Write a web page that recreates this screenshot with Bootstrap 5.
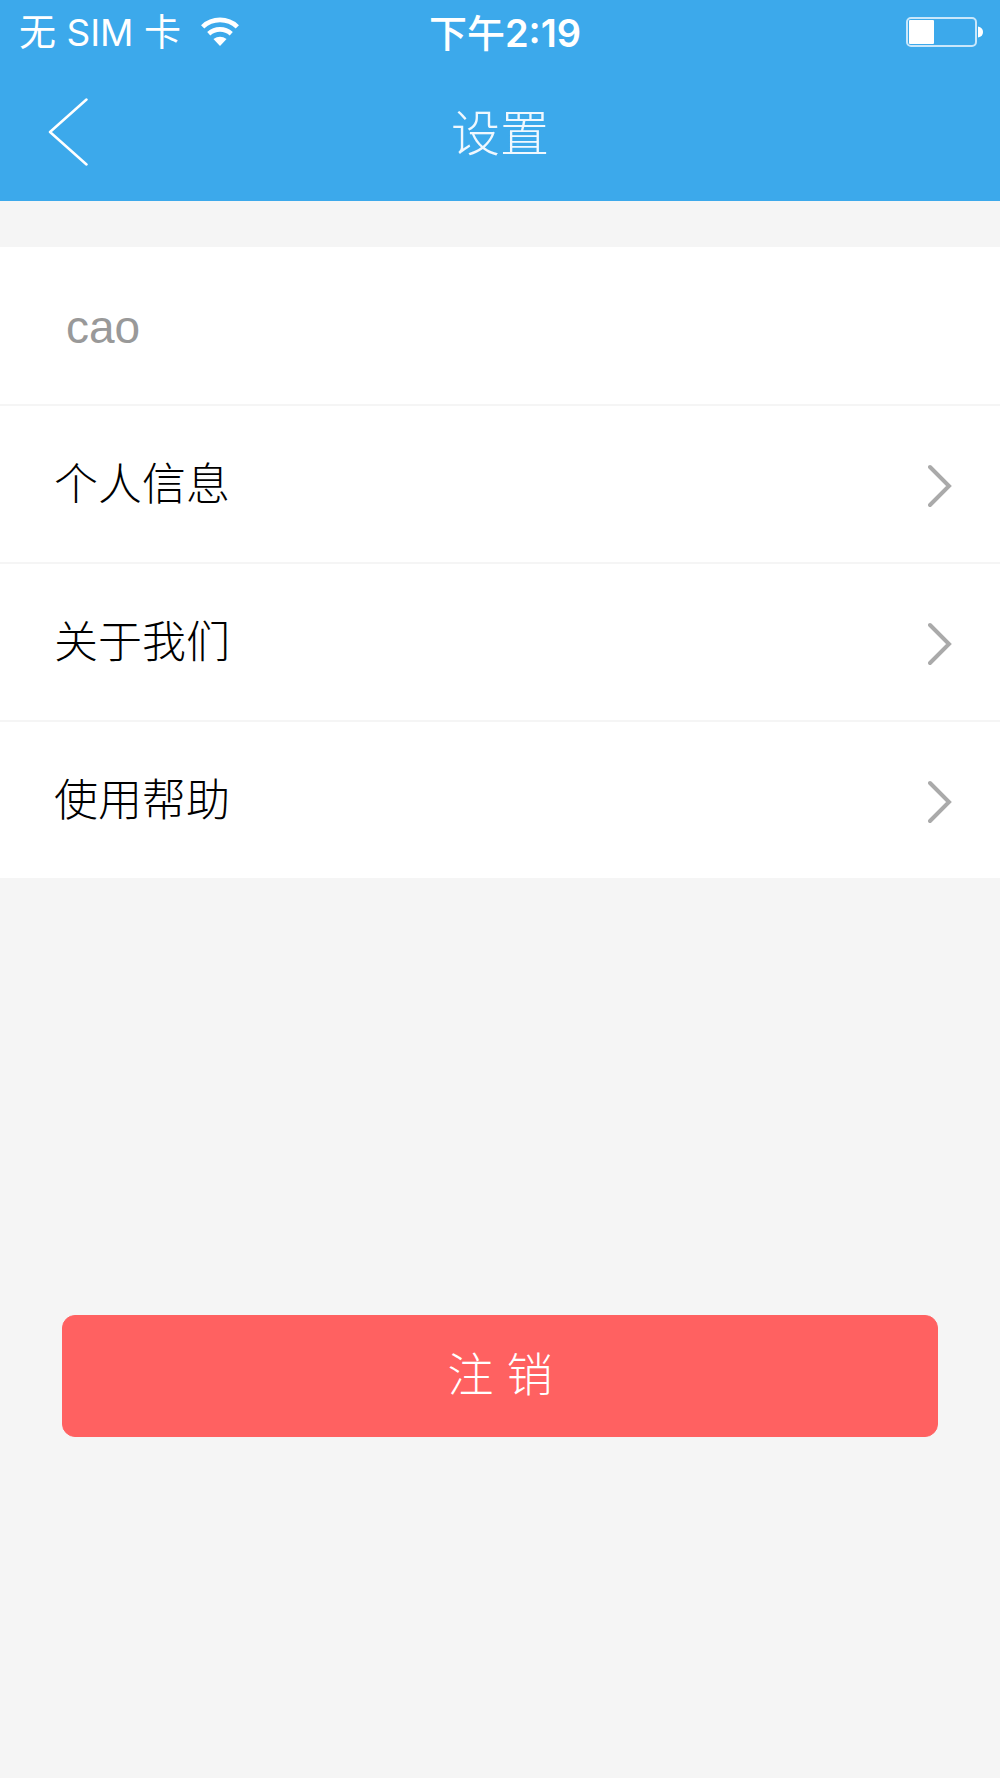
<!DOCTYPE html>
<html lang="zh-CN">
<head>
<meta charset="utf-8">
<meta name="viewport" content="width=device-width, initial-scale=1">
<title>设置</title>
<link href="https://cdn.jsdelivr.net/npm/bootstrap@5.3.0/dist/css/bootstrap.min.css" rel="stylesheet">
<style>
  body { background: #f5f5f5; font-family: "Liberation Sans", "Noto Sans CJK SC", sans-serif; }
  .app-header { background: #3ca9eb; height: 201px; }
  .status-bar { height: 64px; padding: 0 17px 0 19px; font-family: Inter, "Noto Sans CJK SC", sans-serif; font-size: 37px; line-height: 60px; }
  .status-left { gap: 19px; }
  .status-text { padding-top: 2px; }
  .status-time { padding-left: 8px; font-size: 38px; font-weight: 500; }
  .status-digits { font-weight: 600; }
  .title-bar { height: 137px; padding: 0 48px; }
  .back-link { margin-top: 6px; }
  .page-title { padding-top: 2px; font-size: 49px; line-height: 64px; font-weight: 300; color: #f0f8fe; }
  .settings-list { margin-top: 46px; --bs-list-group-border-color: #f5f5f5; }
  .settings-list > .list-group-item { height: 158px; padding: 2px 48px 0 54px; border-width: 0 0 2px; font-size: 44px; line-height: 64px; font-weight: 300; color: #000; }
  .settings-list > .list-group-item:last-child { height: 156px; border-bottom: 0; }
  .settings-list > .user-row { height: 159px; padding-left: 66px; font-size: 46px; color: #999; font-weight: 400; }
  .logout-area { margin-top: 437px; padding: 0 62px; }
  .btn-logout { --bs-btn-color: #fff; --bs-btn-bg: #ff6161; --bs-btn-border-color: #ff6161; --bs-btn-hover-color: #fff; --bs-btn-hover-bg: #f25454; --bs-btn-hover-border-color: #f25454; --bs-btn-border-radius: 13px; height: 122px; padding: 0 0 2px; font-size: 46px; line-height: 64px; font-weight: 300; }
</style>
</head>
<body>
<header class="app-header text-white">
  <div class="status-bar row g-0 align-items-center">
    <div class="col d-flex align-items-center status-left">
      <span class="text-nowrap status-text">无 SIM 卡</span>
      <svg width="40" height="30" viewBox="0 0 42 32" fill="none" stroke="#fff" stroke-width="5" aria-hidden="true">
        <path d="M2.500 10.500a27 27 0 0 1 37 0M9 17.800a18 18 0 0 1 24 0"/>
        <path d="M21 31l-7-7.500q7-5 14 0z" fill="#fff" stroke="none"/>
      </svg>
    </div>
    <div class="col-auto status-time status-text">下午<span class="status-digits">2:19</span></div>
    <div class="col d-flex justify-content-end">
      <svg width="78" height="32" viewBox="0 0 78 32" aria-label="电量" role="img">
        <rect x="2" y="2" width="69" height="28" rx="4" fill="none" stroke="#c9e7fb" stroke-width="2"/>
        <rect x="4" y="4" width="25" height="24" rx="1" fill="#fff"/>
        <path d="M73 10.500q5 1 5 5.500t-5 5.500z" fill="#fff"/>
      </svg>
    </div>
  </div>
  <div class="title-bar row g-0 align-items-center">
    <div class="col">
      <a href="#" class="d-inline-block back-link" aria-label="返回">
        <svg class="d-block" width="41" height="68" viewBox="0 0 41 68" fill="none" stroke="#fff" stroke-width="2.500" stroke-linecap="round" stroke-linejoin="round"><path d="M38.500 1.500L2 34l36.500 32.500"/></svg>
      </a>
    </div>
    <h1 class="col-auto page-title mb-0">设置</h1>
    <div class="col"></div>
  </div>
</header>
<main>
  <div class="list-group list-group-flush settings-list">
    <div class="list-group-item user-row d-flex align-items-center">cao</div>
    <a href="#" class="list-group-item d-flex align-items-center justify-content-between">个人信息
      <svg width="24" height="46" viewBox="0 0 24 46" fill="none" stroke="#aaa" stroke-width="4" stroke-linecap="round"><path d="M2 5l19 19-19 19"/></svg></a>
    <a href="#" class="list-group-item d-flex align-items-center justify-content-between">关于我们
      <svg width="24" height="46" viewBox="0 0 24 46" fill="none" stroke="#aaa" stroke-width="4" stroke-linecap="round"><path d="M2 5l19 19-19 19"/></svg></a>
    <a href="#" class="list-group-item d-flex align-items-center justify-content-between">使用帮助
      <svg width="24" height="46" viewBox="0 0 24 46" fill="none" stroke="#aaa" stroke-width="4" stroke-linecap="round"><path d="M2 5l19 19-19 19"/></svg></a>
  </div>
  <div class="logout-area">
    <button type="button" class="btn btn-logout w-100">注 销</button>
  </div>
</main>
<script src="https://cdn.jsdelivr.net/npm/bootstrap@5.3.0/dist/js/bootstrap.bundle.min.js"></script>
</body>
</html>
